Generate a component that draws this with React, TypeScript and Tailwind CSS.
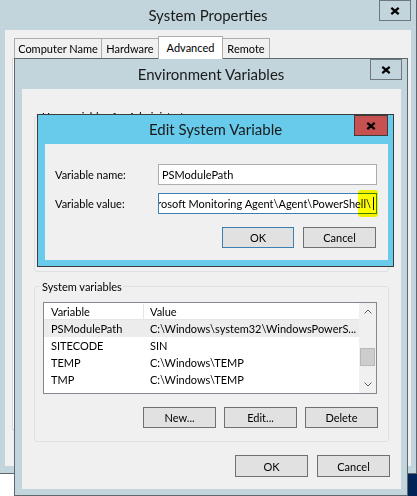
import React from "react";

function CloseBox({ active }: { active?: boolean }) {
  return (
    <div
      className={
        active
          ? "flex h-[21px] w-[34px] items-center justify-center border border-[#3c3c3c] bg-[#c75050]"
          : "flex h-[21px] w-[32px] items-center justify-center border border-[#6e797e]"
      }
    >
      <svg width="10" height="8" viewBox="0 0 10 8">
        <path
          d="M1.3 0.9 L8.7 7.1 M8.7 0.9 L1.3 7.1"
          stroke="#000"
          strokeWidth="2.3"
          fill="none"
        />
      </svg>
    </div>
  );
}

function TitleBar({ title, active, h }: { title: string; active?: boolean; h: string }) {
  return (
    <div className={`grid ${h} grid-cols-[1fr_auto_1fr] items-center`}>
      <div />
      <div className="text-[15px] text-[#1a1a1a]">{title}</div>
      <div className="mr-[5px] self-start justify-self-end">
        <CloseBox active={active} />
      </div>
    </div>
  );
}

function Btn({ children, focus }: { children: React.ReactNode; focus?: boolean }) {
  return (
    <div
      className={
        focus
          ? "flex h-[21px] w-[72px] items-center justify-center border border-[#3c7fb1] bg-[#e1e1e1]"
          : "flex h-[21px] w-[73px] items-center justify-center border border-[#707070] bg-[#e1e1e1]"
      }
    >
      {children}
    </div>
  );
}

const rows = [
  { name: "PSModulePath", value: "C:\\Windows\\system32\\WindowsPowerS...", sel: true },
  { name: "SITECODE", value: "SIN" },
  { name: "TEMP", value: "C:\\Windows\\TEMP" },
  { name: "TMP", value: "C:\\Windows\\TEMP" },
  { name: "USERNAME", value: "SYSTEM" },
];

export default function App() {
  return (
    <div className="relative h-[496px] w-[417px] overflow-hidden bg-white font-['Lato','Liberation_Sans',sans-serif] text-[11px] leading-[15px] text-black">
      <div className="absolute bottom-0 right-0 h-[23px] w-[10px] bg-[#012456]" />

      {/* System Properties */}
      <div className="absolute left-[-1px] top-[-1px] flex h-[475px] w-[418px] flex-col border border-[#5d676c] bg-[#c2d5dc]">
        <TitleBar title="System Properties" h="h-[30px]" />
        <div className="mx-[5px] mb-[7px] flex-1 bg-[#f0f0f0] px-[7px] pt-[6px]">
          <div className="flex h-[22px] items-end whitespace-nowrap pl-[2px]">
            <div className="flex h-[20px] w-[88px] items-center justify-center border border-b-0 border-[#adadad] bg-[#f0f0f0]">
              Computer Name
            </div>
            <div className="-ml-px flex h-[20px] w-[58px] items-center justify-center border border-b-0 border-[#adadad] bg-[#f0f0f0]">
              Hardware
            </div>
            <div className="relative z-10 -mb-px -ml-px flex h-[23px] w-[65px] items-center justify-center border border-b-0 border-[#adadad] bg-white pb-[2px]">
              Advanced
            </div>
            <div className="-ml-px flex h-[20px] w-[48px] items-center justify-center border border-b-0 border-[#adadad] bg-[#f0f0f0]">
              Remote
            </div>
          </div>
          <div className="h-[372px] border border-[#d9d9d9] bg-white" />
        </div>
      </div>

      {/* Environment Variables */}
      <div className="absolute left-[14px] top-[58px] flex h-[438px] w-[394px] flex-col border border-[#5d676c] bg-[#c2d5dc]">
        <TitleBar title="Environment Variables" h="h-[30px]" />
        <div className="mb-[6px] ml-[7px] mr-[6px] flex-1 bg-[#f0f0f0]">
          <fieldset className="ml-[12px] mt-[20px] h-[163px] w-[355px] rounded-[3px] border border-[#dde1e4]">
            <legend className="ml-[6px] px-[1px]">User variables for Administrator</legend>
          </fieldset>

          <fieldset className="ml-[12px] mt-[7px] w-[355px] rounded-[3px] border border-[#dde1e4] pb-[13px]">
            <legend className="ml-[6px] px-[1px]">System variables</legend>
            <div className="ml-[8px] mt-[8px] flex h-[92px] w-[334px] border border-[#828790] bg-white">
              <div className="flex-1 overflow-hidden">
                <div className="flex h-[17px] items-center border-b border-[#e5e5e5]">
                  <div className="w-[100px] border-r border-[#e5e5e5] pl-[7px]">Variable</div>
                  <div className="pl-[6px]">Value</div>
                </div>
                {rows.map((r) => (
                  <div
                    key={r.name}
                    className={
                      r.sel
                        ? "flex h-[17px] items-center whitespace-nowrap bg-[#ececec]"
                        : "flex h-[17px] items-center whitespace-nowrap"
                    }
                  >
                    <div className="w-[100px] pl-[7px]">{r.name}</div>
                    <div className="pl-[6px]">{r.value}</div>
                  </div>
                ))}
              </div>
              <div className="flex w-[17px] flex-col bg-[#f0f0f0]">
                <div className="flex h-[17px] items-center justify-center">
                  <svg width="8" height="5" viewBox="0 0 8 5">
                    <path d="M0.5 4.5 L4 1 L7.5 4.5" stroke="#606060" strokeWidth="1" fill="none" />
                  </svg>
                </div>
                <div className="flex-1 px-px pt-[28px]">
                  <div className="h-[18px] border border-[#b8b8b8] bg-[#cdcdcd]" />
                </div>
                <div className="flex h-[17px] items-center justify-center">
                  <svg width="8" height="5" viewBox="0 0 8 5">
                    <path d="M0.5 0.5 L4 4 L7.5 0.5" stroke="#606060" strokeWidth="1" fill="none" />
                  </svg>
                </div>
              </div>
            </div>
            <div className="mt-[13px] flex justify-end gap-[8px] pr-[10px]">
              <Btn>New...</Btn>
              <Btn>Edit...</Btn>
              <Btn>Delete</Btn>
            </div>
          </fieldset>

          <div className="mt-[13px] flex justify-end gap-[9px] pr-[11px]">
            <div className="flex h-[22px] w-[73px] items-center justify-center border border-[#707070] bg-[#e1e1e1]">
              OK
            </div>
            <div className="flex h-[22px] w-[73px] items-center justify-center border border-[#707070] bg-[#e1e1e1]">
              Cancel
            </div>
          </div>
        </div>
      </div>

      {/* Edit System Variable */}
      <div className="absolute left-[37px] top-[114px] flex h-[153px] w-[357px] flex-col border border-[#3c3c3c] bg-[#68cbec]">
        <TitleBar title="Edit System Variable" active h="h-[29px]" />
        <div className="relative mb-[6px] ml-[7px] mr-[5px] flex-1 bg-[#f0f0f0] pl-[10px] pt-[20px]">
          <div className="flex h-[21px] items-center">
            <div className="w-[103px]">Variable name:</div>
            <div className="flex h-[21px] w-[219px] items-center border border-[#abadb3] bg-white pl-[3px]">
              PSModulePath
            </div>
          </div>
          <div className="mt-[8px] flex h-[21px] items-center">
            <div className="w-[103px]">Variable value:</div>
            <div className="flex h-[21px] w-[219px] items-center justify-end overflow-hidden whitespace-nowrap border border-[#3c7fb1] bg-white pr-[2px]">
              <span>%SystemRoot%\system32\WindowsPowerShell\v1.0\Modules\;C:\Program Files\Microsoft Monitoring Agent\Agent\PowerShell\</span>
              <span className="ml-[2px] inline-block h-[13px] w-px shrink-0 bg-black" />
            </div>
          </div>
          <div className="mt-[13px] flex justify-end gap-[9px] pr-[12px]">
            <Btn focus>OK</Btn>
            <Btn>Cancel</Btn>
          </div>
          <div className="absolute left-[313px] top-[46px] h-[27px] w-[20px] rounded-[3px] bg-[#ffff00] mix-blend-multiply" />
        </div>
      </div>
    </div>
  );
}
